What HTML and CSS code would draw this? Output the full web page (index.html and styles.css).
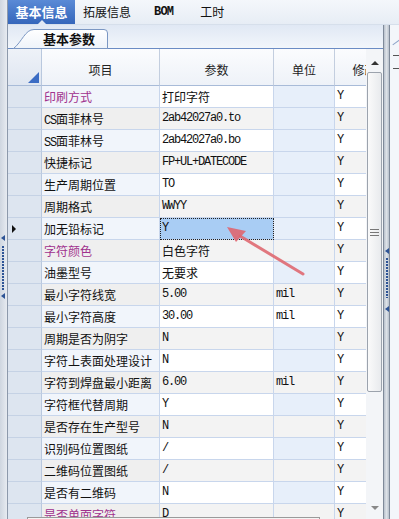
FILE: index.html
```html
<!DOCTYPE html>
<html lang="zh-CN">
<head>
    <meta charset="UTF-8">
    <title>基本参数</title>
    <link rel="stylesheet" href="styles.css">
</head>
<body>
    <div class="app">
        <!-- 左侧折叠条 -->
        <div class="edge-left">
            <span class="grip-tri grip-tri-1"></span>
            <span class="grip-dots"></span>
            <span class="grip-tri grip-tri-2"></span>
        </div>

        <div class="body-col">
            <!-- 顶部页签 -->
            <div class="tabbar">
                <div class="tab tab-active">基本信息</div>
                <div class="tab tab-2">拓展信息</div>
                <div class="tab tab-3 en">BOM</div>
                <div class="tab tab-4">工时</div>
            </div>

            <div class="workspace">
                <div class="panel">
                    <div class="subtabs">
                        <div class="subtab">
                            <svg class="subtab-bg" width="96" height="20" viewBox="0 0 96 20">
                                <defs>
                                    <linearGradient id="stg" x1="0" y1="0" x2="0" y2="1">
                                        <stop offset="0" stop-color="#ffffff"/>
                                        <stop offset="1" stop-color="#eef3fa"/>
                                    </linearGradient>
                                </defs>
                                <path d="M0.5 19.5 C 9 13, 12 0.5, 21 0.5 L 91 0.5 Q 94.5 0.5 94.5 4 L 94.5 19.5 Z" fill="url(#stg)" stroke="#7b97c3"/>
                            </svg>
                            <span class="subtab-text">基本参数</span>
                        </div>
                    </div>

                    <div class="grid-area">
                        <div class="grid">
                            <div class="row head">
                                <div class="cell rh"><span class="corner"></span></div>
                                <div class="cell hc">项目</div>
                                <div class="cell hc">参数</div>
                                <div class="cell hc">单位</div>
                                <div class="cell hc">修改</div>
                            </div>

                            <div class="row">
                                <div class="cell rh"></div>
                                <div class="cell item mark">印刷方式</div>
                                <div class="cell val">打印字符</div>
                                <div class="cell unit empty"></div>
                                <div class="cell flag en">Y</div>
                            </div>
                            <div class="row odd">
                                <div class="cell rh"></div>
                                <div class="cell item"><span class="en">CS</span>面菲林号</div>
                                <div class="cell val en">2ab42027a0.to</div>
                                <div class="cell unit empty"></div>
                                <div class="cell flag en">Y</div>
                            </div>
                            <div class="row">
                                <div class="cell rh"></div>
                                <div class="cell item"><span class="en">SS</span>面菲林号</div>
                                <div class="cell val en">2ab42027a0.bo</div>
                                <div class="cell unit empty"></div>
                                <div class="cell flag en">Y</div>
                            </div>
                            <div class="row odd">
                                <div class="cell rh"></div>
                                <div class="cell item">快捷标记</div>
                                <div class="cell val en">FP+UL+DATECODE</div>
                                <div class="cell unit empty"></div>
                                <div class="cell flag en">Y</div>
                            </div>
                            <div class="row">
                                <div class="cell rh"></div>
                                <div class="cell item">生产周期位置</div>
                                <div class="cell val en">TO</div>
                                <div class="cell unit empty"></div>
                                <div class="cell flag en">Y</div>
                            </div>
                            <div class="row odd">
                                <div class="cell rh"></div>
                                <div class="cell item">周期格式</div>
                                <div class="cell val en">WWYY</div>
                                <div class="cell unit empty"></div>
                                <div class="cell flag en">Y</div>
                            </div>
                            <div class="row current">
                                <div class="cell rh"><span class="pointer"></span></div>
                                <div class="cell item">加无铅标记</div>
                                <div class="cell val en sel">Y</div>
                                <div class="cell unit empty"></div>
                                <div class="cell flag en">Y</div>
                            </div>
                            <div class="row odd">
                                <div class="cell rh"></div>
                                <div class="cell item mark">字符颜色</div>
                                <div class="cell val">白色字符</div>
                                <div class="cell unit"></div>
                                <div class="cell flag en">Y</div>
                            </div>
                            <div class="row">
                                <div class="cell rh"></div>
                                <div class="cell item">油墨型号</div>
                                <div class="cell val">无要求</div>
                                <div class="cell unit empty"></div>
                                <div class="cell flag en">Y</div>
                            </div>
                            <div class="row odd">
                                <div class="cell rh"></div>
                                <div class="cell item">最小字符线宽</div>
                                <div class="cell val en">5.00</div>
                                <div class="cell unit en">mil</div>
                                <div class="cell flag en">Y</div>
                            </div>
                            <div class="row">
                                <div class="cell rh"></div>
                                <div class="cell item">最小字符高度</div>
                                <div class="cell val en">30.00</div>
                                <div class="cell unit en">mil</div>
                                <div class="cell flag en">Y</div>
                            </div>
                            <div class="row odd">
                                <div class="cell rh"></div>
                                <div class="cell item">周期是否为阴字</div>
                                <div class="cell val en">N</div>
                                <div class="cell unit empty"></div>
                                <div class="cell flag en">Y</div>
                            </div>
                            <div class="row">
                                <div class="cell rh"></div>
                                <div class="cell item">字符上表面处理设计</div>
                                <div class="cell val en">N</div>
                                <div class="cell unit empty"></div>
                                <div class="cell flag en">Y</div>
                            </div>
                            <div class="row odd">
                                <div class="cell rh"></div>
                                <div class="cell item">字符到焊盘最小距离</div>
                                <div class="cell val en">6.00</div>
                                <div class="cell unit en">mil</div>
                                <div class="cell flag en">Y</div>
                            </div>
                            <div class="row">
                                <div class="cell rh"></div>
                                <div class="cell item">字符框代替周期</div>
                                <div class="cell val en">Y</div>
                                <div class="cell unit empty"></div>
                                <div class="cell flag en">Y</div>
                            </div>
                            <div class="row odd">
                                <div class="cell rh"></div>
                                <div class="cell item">是否存在生产型号</div>
                                <div class="cell val en">N</div>
                                <div class="cell unit"></div>
                                <div class="cell flag en">Y</div>
                            </div>
                            <div class="row">
                                <div class="cell rh"></div>
                                <div class="cell item">识别码位置图纸</div>
                                <div class="cell val en">/</div>
                                <div class="cell unit empty"></div>
                                <div class="cell flag en">Y</div>
                            </div>
                            <div class="row odd">
                                <div class="cell rh"></div>
                                <div class="cell item">二维码位置图纸</div>
                                <div class="cell val en">/</div>
                                <div class="cell unit"></div>
                                <div class="cell flag en">Y</div>
                            </div>
                            <div class="row">
                                <div class="cell rh"></div>
                                <div class="cell item">是否有二维码</div>
                                <div class="cell val en">N</div>
                                <div class="cell unit empty"></div>
                                <div class="cell flag en">Y</div>
                            </div>
                            <div class="row odd">
                                <div class="cell rh"></div>
                                <div class="cell item mark">是否单面字符</div>
                                <div class="cell val en">D</div>
                                <div class="cell unit"></div>
                                <div class="cell flag en">Y</div>
                            </div>
                        </div>

                        <!-- 纵向滚动条 -->
                        <div class="vscroll">
                            <span class="arrow-up"></span>
                            <div class="thumb"><span class="thumb-grip"></span></div>
                            <span class="arrow-down"></span>
                        </div>
                    </div>
                </div>

                <!-- 右侧分隔条 -->
                <div class="splitter">
                    <span class="grip-tri grip-tri-3"></span>
                    <span class="grip-dots grip-dots-r"></span>
                    <span class="grip-tri grip-tri-4"></span>
                </div>
                <div class="side-right">
                    <span class="side-tab"></span>
                    <span class="side-line side-line-1"></span>
                    <span class="side-line side-line-2"></span>
                </div>
            </div>
        </div>
    </div>

    <!-- 标注箭头 -->
    <svg class="note-arrow" width="399" height="519" viewBox="0 0 399 519">
        <line x1="303" y1="274" x2="240" y2="236" stroke="#e06a72" stroke-width="3" stroke-linecap="round" opacity="0.9"/>
        <polygon points="227,227 246,231 236,242" fill="#df6670" opacity="0.9"/>
    </svg>

    <div class="tip-box"></div>
</body>
</html>
```

FILE: styles.css
```css
/* 基本参数页面 */

body {
    margin: 0;
    width: 399px;
    height: 519px;
    overflow: hidden;
    position: relative;
    font-family: "Noto Sans CJK SC", sans-serif;
    font-size: 12px;
    color: #111;
    background: #fff;
}

.en {
    font-family: "Liberation Mono", "Noto Sans CJK SC", monospace;
    font-size: 12px;
    letter-spacing: -1.2px;
}

.app {
    display: flex;
    height: 519px;
}

/* 左侧折叠条 */

.edge-left {
    width: 7px;
    flex: none;
    border-right: 1px solid #8d99ab;
    background: linear-gradient(to right, #cfd6e0, #e7ebf1);
    position: relative;
}

.grip-tri {
    position: absolute;
    width: 0;
    height: 0;
    border-top: 3px solid transparent;
    border-bottom: 3px solid transparent;
    border-right: 4px solid #2e5496;
}

.grip-tri-1 {
    left: 1px;
    top: 235px;
}

.grip-tri-2 {
    left: 1px;
    top: 293px;
}

.grip-dots {
    position: absolute;
    left: 2px;
    top: 246px;
    width: 2px;
    height: 45px;
    background: repeating-linear-gradient(#2e5496 0 2px, transparent 2px 3px);
}

.body-col {
    flex: 1;
    min-width: 0;
    display: flex;
    flex-direction: column;
}

/* 顶部页签 */

.tabbar {
    height: 24px;
    flex: none;
    display: flex;
    border-bottom: 1px solid #d6dfeb;
    background: linear-gradient(#f4f7fb, #e7edf5);
}

.tab {
    line-height: 24px;
    font-size: 12px;
    color: #111;
    white-space: nowrap;
}

.tab-active {
    width: 67px;
    text-align: center;
    font-size: 13px;
    font-weight: bold;
    color: #fff;
    background: linear-gradient(#5a8ad6, #3566bb);
    position: relative;
}

.tab-active::after {
    content: "";
    position: absolute;
    left: 29px;
    bottom: -1px;
    border-left: 5px solid transparent;
    border-right: 5px solid transparent;
    border-bottom: 5px solid #e2e9f4;
}

.tab-2 {
    margin-left: 8px;
}

.tab-3 {
    margin-left: 23px;
    font-weight: bold;
    letter-spacing: -0.8px;
}

.tab-4 {
    margin-left: 27px;
}

.workspace {
    flex: 1;
    min-height: 0;
    display: flex;
}

.panel {
    width: 375px;
    flex: none;
    display: flex;
    flex-direction: column;
}

/* 子页签 */

.subtabs {
    height: 24px;
    flex: none;
    box-sizing: border-box;
    border-bottom: 1px solid #6b8cc4;
    background: linear-gradient(#e0e8f4, #f2f6fb);
    padding-left: 5px;
    padding-top: 4px;
}

.subtab {
    position: relative;
    width: 96px;
    height: 19px;
}

.subtab-bg {
    position: absolute;
    left: 0;
    top: 0;
}

.subtab-text {
    position: relative;
    display: block;
    padding-left: 30px;
    line-height: 20px;
    font-size: 13px;
    font-weight: bold;
}

/* 表格 */

.grid-area {
    flex: 1;
    min-height: 0;
    display: flex;
}

.grid {
    width: 358px;
    flex: none;
    overflow: hidden;
}

.row {
    display: grid;
    grid-template-columns: 34px 118px 114px 61px 60px;
    height: 22px;
    background: #fff;
}

.row.odd {
    background: #f3f3f3;
}

.cell {
    box-sizing: border-box;
    border-right: 1px solid #c8d6ec;
    border-bottom: 1px solid #c8d6ec;
    line-height: 21px;
    padding-left: 2px;
    white-space: nowrap;
    overflow: hidden;
    position: relative;
}

.row.head {
    height: 37px;
}

.hc {
    display: flex;
    align-items: center;
    justify-content: center;
    padding: 4px 0 0;
    background: linear-gradient(#fbfcfe, #eef2f8);
    border-right-color: #c3cedf;
    border-bottom-color: #a8bbd8;
    color: #222;
}

.rh {
    background: #dde5f0;
    border-right-color: #b9c8de;
    border-bottom-color: #c5d2e5;
}

.head .rh {
    background: linear-gradient(#eef2f8, #dfe6f1);
    border-bottom-color: #a8bbd8;
}

.corner {
    position: absolute;
    right: 2px;
    bottom: 2px;
    width: 0;
    height: 0;
    border-left: 11px solid transparent;
    border-bottom: 11px solid #3b6cc4;
}

.pointer {
    position: absolute;
    left: 4px;
    top: 7px;
    width: 0;
    height: 0;
    border-top: 4px solid transparent;
    border-bottom: 4px solid transparent;
    border-left: 4px solid #111;
}

.item {
    background: #f1f5fb;
}

.odd .item {
    background: #efefef;
}

.mark {
    color: #a0318d;
}

.val.sel {
    background: #a9cdf4;
    outline: 1px dotted #222;
    outline-offset: -1px;
}

.unit.empty {
    background: #e7effa;
}

/* 纵向滚动条 */

.vscroll {
    width: 17px;
    flex: none;
    display: flex;
    flex-direction: column;
    align-items: center;
    background: #f3f5f8;
}

.arrow-up {
    margin-top: 12px;
    width: 0;
    height: 0;
    border-left: 4px solid transparent;
    border-right: 4px solid transparent;
    border-bottom: 4px solid #333;
}

.thumb {
    margin-top: 7px;
    width: 15px;
    height: 320px;
    box-sizing: border-box;
    border: 1px solid #9ca3ad;
    border-radius: 2px;
    background: linear-gradient(to right, #fafafa, #e8eaed);
    display: flex;
    align-items: center;
    justify-content: center;
}

.thumb-grip {
    width: 9px;
    height: 5px;
    border-top: 1px solid #777;
    border-bottom: 1px solid #777;
    background: linear-gradient(transparent 2px, #777 2px 3px, transparent 3px);
}

.arrow-down {
    margin-top: auto;
    margin-bottom: 9px;
    width: 0;
    height: 0;
    border-left: 4px solid transparent;
    border-right: 4px solid transparent;
    border-top: 4px solid #888;
}

/* 右侧分隔条 */

.splitter {
    width: 5px;
    flex: none;
    border-left: 1px solid #7f8a9a;
    border-right: 1px solid #7f8a9a;
    background: linear-gradient(to right, #b9c1cc, #dde2e8, #b9c1cc);
    position: relative;
}

.grip-tri-3 {
    left: 1px;
    top: 223px;
}

.grip-tri-4 {
    left: 1px;
    top: 281px;
}

.grip-dots-r {
    left: 2px;
    top: 233px;
    height: 40px;
}

.side-right {
    flex: 1;
    background: #f3f6fa;
    position: relative;
}

.side-tab {
    position: absolute;
    left: 2px;
    top: 17px;
    width: 8px;
    height: 1px;
    background: #8da3c8;
    transform: rotate(-35deg);
}

.side-line {
    position: absolute;
    left: 3px;
    right: 0;
    height: 1px;
    background: #555;
}

.side-line-1 {
    top: 30px;
}

.side-line-2 {
    top: 43px;
}

/* 标注与底部提示框 */

.note-arrow {
    position: absolute;
    left: 0;
    top: 0;
    pointer-events: none;
}

.tip-box {
    position: absolute;
    left: 27px;
    top: 517px;
    width: 291px;
    height: 10px;
    border: 1px solid #9a9a9a;
    background: #f4f4f4;
}
```
